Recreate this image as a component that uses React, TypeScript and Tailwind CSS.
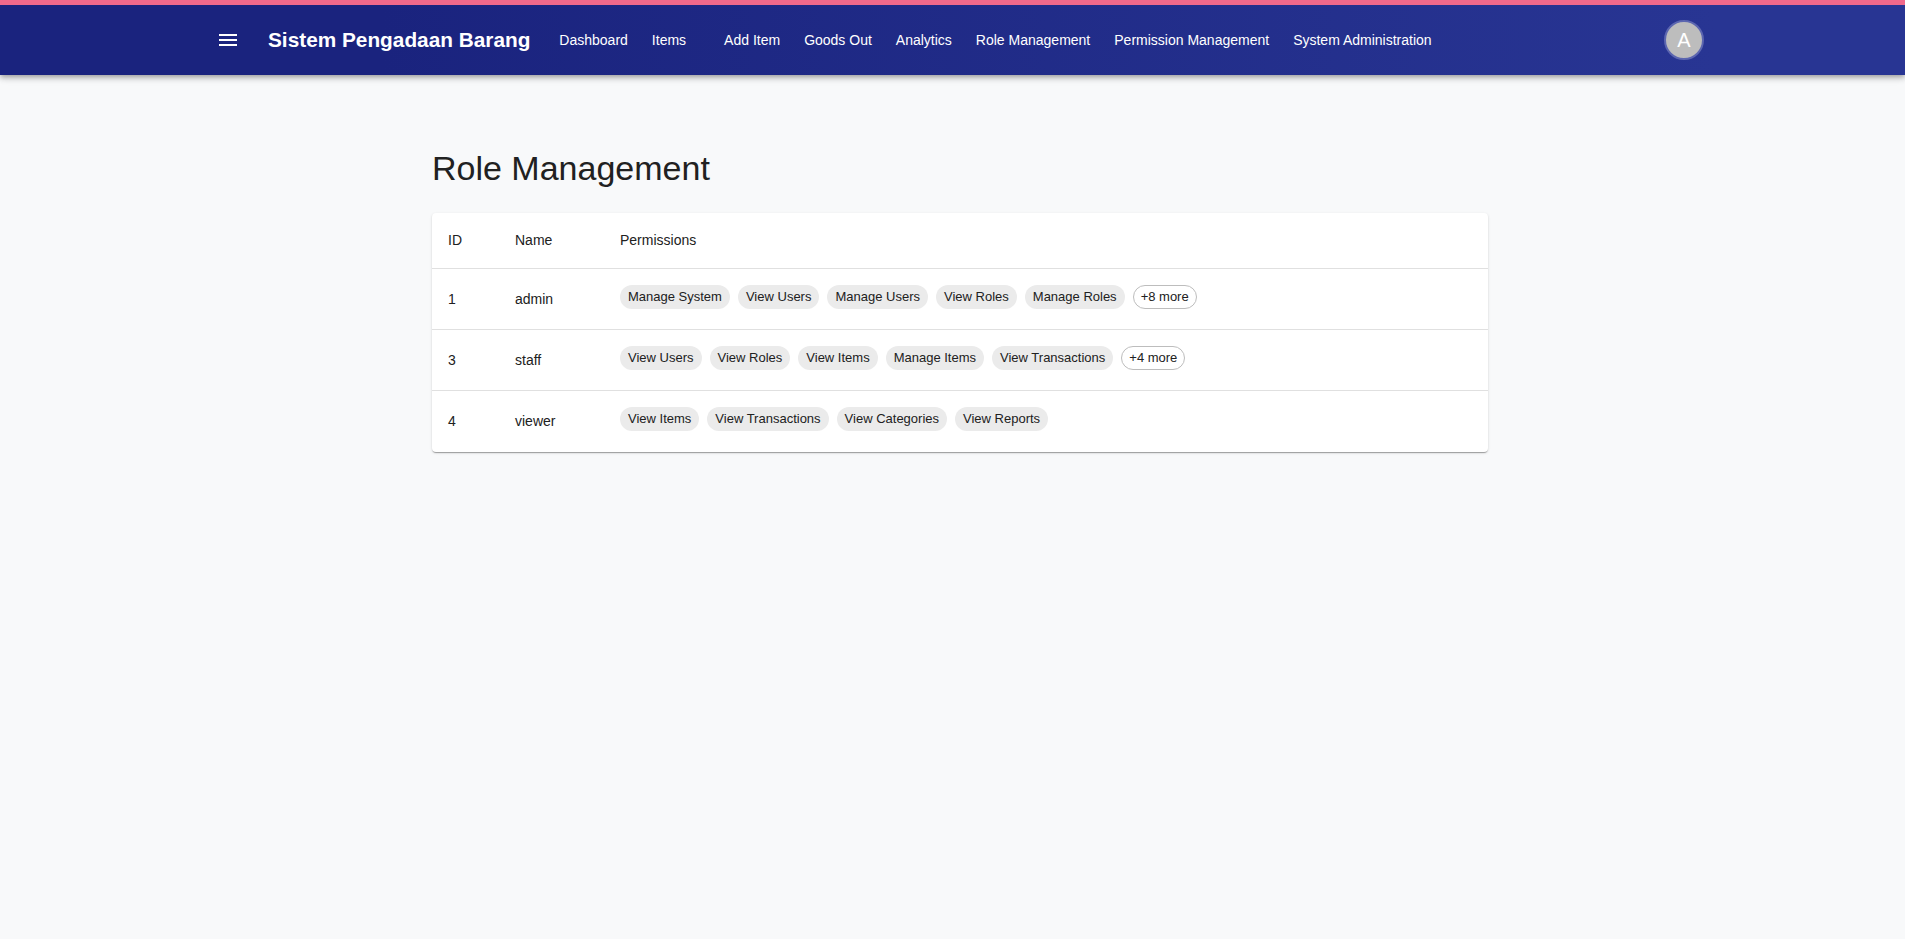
import React from "react";

interface Role {
  id: number;
  name: string;
  permissions: string[];
  more?: number;
}

const navItems = [
  "Dashboard",
  "Items",
  "Add Item",
  "Goods Out",
  "Analytics",
  "Role Management",
  "Permission Management",
  "System Administration",
];

const roles: Role[] = [
  {
    id: 1,
    name: "admin",
    permissions: ["Manage System", "View Users", "Manage Users", "View Roles", "Manage Roles"],
    more: 8,
  },
  {
    id: 3,
    name: "staff",
    permissions: ["View Users", "View Roles", "View Items", "Manage Items", "View Transactions"],
    more: 4,
  },
  {
    id: 4,
    name: "viewer",
    permissions: ["View Items", "View Transactions", "View Categories", "View Reports"],
  },
];

const MenuIcon = () => (
  <svg viewBox="0 0 24 24" className="h-6 w-6" fill="currentColor">
    <path d="M3 18h18v-2H3zm0-5h18v-2H3zm0-7v2h18V6z" />
  </svg>
);

const Chip = ({ label, outlined }: { label: string; outlined?: boolean }) => (
  <span
    className={`inline-flex h-6 items-center rounded-full text-[13px] text-[#212121] whitespace-nowrap ${
      outlined ? "border border-[#bdbdbd] bg-white px-[7px]" : "bg-[#ebebeb] px-2"
    }`}
  >
    {label}
  </span>
);

const Header = () => (
  <header className="bg-[linear-gradient(90deg,#1a237e_20%,#283593_90%)] text-white shadow-[0px_2px_4px_-1px_rgba(0,0,0,0.2),0px_4px_5px_0px_rgba(0,0,0,0.14),0px_1px_10px_0px_rgba(0,0,0,0.12)]">
    <div className="h-[5px] bg-[#f0698b]" />
    <div className="ml-[192px] flex h-[70px] w-[1536px] items-center px-6">
      <button className="flex h-6 w-6 items-center justify-center text-white">
        <MenuIcon />
      </button>
      <h1 className="ml-[28px] mr-[21px] text-[20.8px] font-bold tracking-normal">
        Sistem Pengadaan Barang
      </h1>
      <nav className="flex items-center gap-2">
        {navItems.map((item) => (
          <button
            key={item}
            className={`py-1.5 text-[14px] leading-6 text-white ${
              item === "Items" ? "pl-2 pr-[22px]" : "px-2"
            }`}
          >
            {item}
          </button>
        ))}
      </nav>
      <div className="ml-auto flex h-10 w-10 items-center justify-center rounded-full border-2 border-[#5c66b0] bg-[#bdbdbd] text-[20px] text-white">
        A
      </div>
    </div>
  </header>
);

const RoleTable = () => (
  <div className="w-[1056px] rounded bg-white text-[14px] text-[#212121] shadow-[0px_2px_1px_-1px_rgba(0,0,0,0.2),0px_1px_1px_0px_rgba(0,0,0,0.14),0px_1px_3px_0px_rgba(0,0,0,0.12)]">
    <div className="flex h-[56px] items-center border-b border-[#e0e0e0]">
      <div className="w-[67px] pl-4">ID</div>
      <div className="w-[105px] pl-4">Name</div>
      <div className="flex-1 pl-4">Permissions</div>
    </div>
    {roles.map((role, i) => (
      <div
        key={role.id}
        className={`flex h-[61px] items-center ${
          i < roles.length - 1 ? "border-b border-[#e0e0e0]" : ""
        }`}
      >
        <div className="w-[67px] pl-4">{role.id}</div>
        <div className="w-[105px] pl-4">{role.name}</div>
        <div className="flex flex-1 flex-wrap gap-2 pl-4 pb-[5px]">
          {role.permissions.map((p) => (
            <Chip key={p} label={p} />
          ))}
          {role.more ? <Chip label={`+${role.more} more`} outlined /> : null}
        </div>
      </div>
    ))}
  </div>
);

export default function App() {
  return (
    <div className="min-h-screen bg-[#f8f9fa] font-['Liberation_Sans',Arial,sans-serif]">
      <Header />
      <main className="ml-[432px] pt-[72px]">
        <h2 className="mb-[24px] text-[34px] leading-[42px] text-[#212121]">Role Management</h2>
        <RoleTable />
      </main>
    </div>
  );
}
